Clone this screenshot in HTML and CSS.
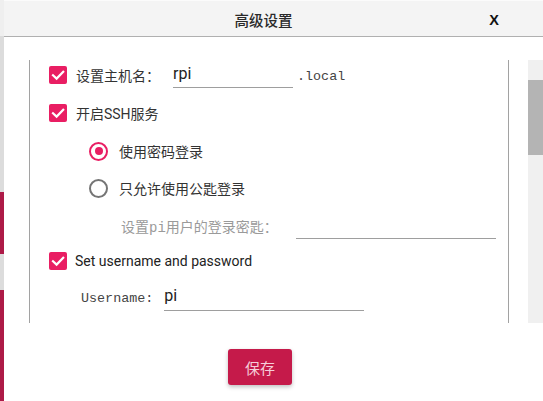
FILE: index.html
```html
<!DOCTYPE html>
<html lang="zh">
<head>
<meta charset="utf-8">
<title>高级设置</title>
<link rel="stylesheet" href="styles.css">
</head>
<body>
<div class="app">
  <div class="strip">
    <div class="seg seg-top"></div>
    <div class="seg seg-gray h156"></div>
    <div class="seg seg-red h62"></div>
    <div class="seg seg-gray h36"></div>
    <div class="seg seg-red fill"></div>
  </div>
  <div class="dialog">
    <header class="hdr">
      <span class="title">高级设置</span>
      <span class="close">X</span>
    </header>
    <div class="main">
      <div class="frame">
        <div class="row r1">
          <span class="cb"><svg viewBox="0 0 18 18" width="18" height="18"><path d="M4 9.2 L7.6 12.6 L14.2 5.8" fill="none" stroke="#fff" stroke-width="2.2" stroke-linecap="square"/></svg></span>
          <span class="lbl lbl-host">设置主机名：</span>
          <input class="field f-host" type="text" value="rpi">
          <span class="mono suffix">.local</span>
        </div>
        <div class="row r2">
          <span class="cb"><svg viewBox="0 0 18 18" width="18" height="18"><path d="M4 9.2 L7.6 12.6 L14.2 5.8" fill="none" stroke="#fff" stroke-width="2.2" stroke-linecap="square"/></svg></span>
          <span class="lbl">开启SSH服务</span>
        </div>
        <div class="row r3">
          <span class="radio on"><span class="dot"></span></span>
          <span class="lbl">使用密码登录</span>
        </div>
        <div class="row r4">
          <span class="radio"></span>
          <span class="lbl">只允许使用公匙登录</span>
        </div>
        <div class="row r5">
          <span class="hint">设置pi用户的登录密匙：</span>
          <input class="field f-key" type="text" value="">
        </div>
        <div class="row r6">
          <span class="cb"><svg viewBox="0 0 18 18" width="18" height="18"><path d="M4 9.2 L7.6 12.6 L14.2 5.8" fill="none" stroke="#fff" stroke-width="2.2" stroke-linecap="square"/></svg></span>
          <span class="lbl lbl-en">Set username and password</span>
        </div>
        <div class="row r7">
          <span class="mono user-lbl">Username:</span>
          <input class="field f-user" type="text" value="pi">
        </div>
      </div>
      <div class="scrollbar"><div class="thumb"></div></div>
    </div>
    <div class="footer">
      <button class="save">保存</button>
    </div>
  </div>
</div>
</body>
</html>
```

FILE: styles.css
```css
* { box-sizing: border-box; }
html, body { margin: 0; padding: 0; }
body {
  width: 543px;
  height: 401px;
  overflow: hidden;
  background: #fff;
  font-family: Roboto, "Noto Sans CJK SC", sans-serif;
}
.app {
  display: flex;
  height: 401px;
}
.strip {
  width: 4px;
  display: flex;
  flex-direction: column;
}
.seg-top { height: 36px; background: #efefef; }
.seg-gray { background: #dcdcdc; }
.seg-red { background: #ad1a47; }
.h156 { height: 156px; }
.h62 { height: 62px; }
.h36 { height: 36px; }
.fill { flex: 1; }

.dialog {
  flex: 1;
  display: flex;
  flex-direction: column;
  background: #fff;
}
.hdr {
  height: 37px;
  background: #f4f4f4;
  border-top: 1px solid #fbfbfb;
  border-bottom: 1px solid #b0b0b0;
  display: grid;
  align-items: center;
}
.title, .close { grid-area: 1 / 1; }
.title {
  text-align: center;
  padding-right: 20px;
  font-family: "Noto Sans CJK SC", sans-serif;
  font-size: 14.5px;
  font-weight: 500;
  color: #2a2a2a;
  padding-top: 1px;
}
.close {
  justify-self: end;
  margin-right: 44px;
  font-family: "Liberation Sans", Arial, sans-serif;
  font-weight: 700;
  font-size: 14.5px;
  color: #111;
  padding-top: 2px;
}

.main {
  display: flex;
  padding: 23px 0 0 25px;
}
.frame {
  width: 480px;
  height: 263px;
  border-left: 1px solid #a2a2a2;
  border-right: 1px solid #a2a2a2;
  padding-left: 19px;
  display: flex;
  flex-direction: column;
}
.scrollbar {
  width: 15px;
  height: 263px;
  margin-left: 19px;
  background: #f0f0f0;
  padding-top: 20px;
}
.thumb {
  height: 75px;
  background: #b4b4b4;
}

.row {
  display: flex;
  align-items: center;
}
.r1 { height: 29px; }
.r2 { height: 48px; }
.r3 { height: 28px; padding-left: 40px; }
.r4 { height: 46px; padding-left: 40px; }
.r5 { height: 28px; padding-left: 72px; }
.r6 { height: 44px; }
.r7 { height: 28px; padding-left: 32px; }

.cb {
  width: 18px;
  height: 18px;
  border-radius: 2px;
  background: #e91e63;
  display: flex;
  flex: none;
}
.lbl {
  margin-left: 9px;
  font-size: 14px;
  color: #333;
}
.lbl-host { width: 97px; }
.lbl-en { margin-left: 8px; color: #222; }
.r3 .lbl, .r4 .lbl { margin-left: 11px; }

.radio {
  width: 19px;
  height: 19px;
  border-radius: 50%;
  border: 2px solid #757575;
  display: flex;
  align-items: center;
  justify-content: center;
  flex: none;
}
.radio.on { border: 2.5px solid #e91e63; }
.dot {
  width: 8px;
  height: 8px;
  border-radius: 50%;
  background: #e91e63;
}

.field {
  height: 28px;
  border: 0;
  border-bottom: 1px solid #9e9e9e;
  background: transparent;
  padding: 0 0 1px 0;
  margin: 0;
  font-family: Roboto, sans-serif;
  font-size: 16px;
  color: #222;
  outline: none;
  align-self: flex-start;
}
.f-host { width: 120px; }
.f-key { width: 200px; margin-left: 18px; }
.f-user { width: 200px; margin-left: 11px; padding-bottom: 3px; }

.mono {
  font-family: "Liberation Mono", "Noto Sans CJK SC", monospace;
  font-size: 13.4px;
  color: #444;
}
.suffix { margin-left: 4px; padding-top: 3px; }
.user-lbl { padding-top: 2px; }
.hint {
  font-family: "Liberation Mono", "Noto Sans CJK SC", monospace;
  font-size: 14px;
  color: #9a9a9a;
  padding-top: 2px;
}

.footer {
  padding: 26px 0 0 224px;
}
.save {
  width: 64px;
  height: 36px;
  border: 0;
  border-radius: 3px;
  background: #c51a4a;
  color: #f6cdd9;
  font-family: "Noto Sans CJK SC", sans-serif;
  font-size: 15px;
  box-shadow: 0 2px 4px rgba(0, 0, 0, 0.25);
  padding: 0;
}
```
